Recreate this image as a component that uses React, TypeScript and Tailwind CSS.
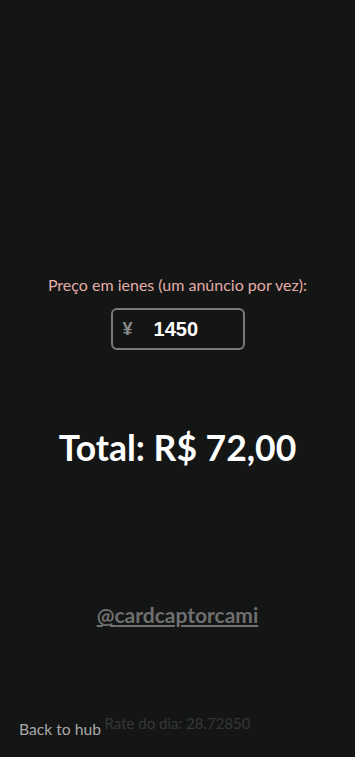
import React from "react";

export default function App() {
  return (
    <div
      className="relative min-h-[757px] w-full bg-[#141615] flex flex-col items-center"
      style={{ fontFamily: "Lato, 'Noto Sans', sans-serif" }}
    >
      <p className="mt-[274px] text-[16px] leading-[21px] text-[#e3aca6]">
        Preço em ienes (um anúncio por vez):
      </p>
      <div className="mt-[13px] w-[134px] h-[42px] rounded-[6px] border-2 border-[#7a7a7a] flex items-center">
        <span className="ml-[10px] text-[18px] font-bold text-[#8a8a8a]" style={{ fontFamily: "'Liberation Sans', sans-serif" }}>¥</span>
        <span className="ml-[21px] text-[20px] font-bold text-white" style={{ fontFamily: "'Liberation Sans', sans-serif" }}>1450</span>
      </div>
      <h1 className="mt-[76px] text-[35.5px] leading-[44px] font-bold text-white">Total: R$ 72,00</h1>
      <a className="mt-[131px] text-[21px] leading-[28px] font-bold text-[#6f6f6f] underline">@cardcaptorcami</a>
      <p className="mt-[84px] text-[15px] leading-[20px] text-[#363636]">Rate do dia: 28.72850</p>
      <a className="absolute left-[19px] top-[719px] text-[15.7px] leading-[20px] text-[#a8a8a8]">Back to hub</a>
    </div>
  );
}
